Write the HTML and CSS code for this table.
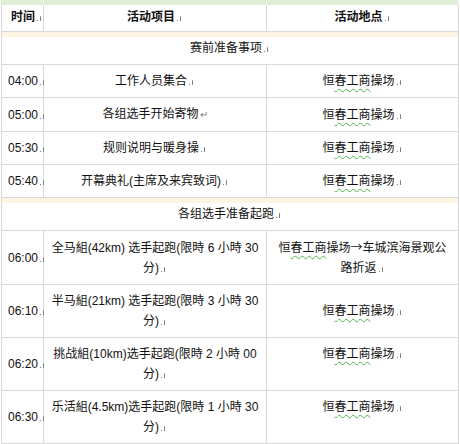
FILE: index.html
```html
<!DOCTYPE html>
<html lang="zh">
<head>
<meta charset="utf-8">
<title>赛程安排</title>
<link rel="stylesheet" href="styles.css">
</head>
<body>
<table class="sched">
  <colgroup><col class="c1"><col class="c2"><col class="c3"></colgroup>
  <tr class="green"><td></td><td></td><td></td></tr>
  <tr class="head">
    <td class="t">时间<i class="pm"></i></td>
    <td class="m">活动项目<i class="pm"></i></td>
    <td class="m">活动地点<i class="pm"></i></td>
  </tr>
  <tr class="cream"><td colspan="3"></td></tr>
  <tr class="section"><td colspan="3">赛前准备事项<i class="pm"></i></td></tr>
  <tr>
    <td class="t">04:00<i class="pm"></i></td>
    <td class="m">工作人员集合<i class="pm"></i></td>
    <td class="m">恒<span class="sp">春工商</span>操场<i class="pm"></i></td>
  </tr>
  <tr>
    <td class="t">05:00<i class="pm"></i></td>
    <td class="m">各组选手开始寄物<i class="br">↵</i></td>
    <td class="m">恒<span class="sp">春工商</span>操场<i class="pm"></i></td>
  </tr>
  <tr>
    <td class="t">05:30<i class="pm"></i></td>
    <td class="m">规则说明与暖身操<i class="pm"></i></td>
    <td class="m">恒<span class="sp">春工商</span>操场<i class="pm"></i></td>
  </tr>
  <tr>
    <td class="t">05:40<i class="pm"></i></td>
    <td class="m">开幕典礼(主席及来宾致词)<i class="pm"></i></td>
    <td class="m">恒<span class="sp">春工商</span>操场<i class="pm"></i></td>
  </tr>
  <tr class="cream"><td colspan="3"></td></tr>
  <tr class="section"><td colspan="3">各组选手准备起跑<i class="pm"></i></td></tr>
  <tr>
    <td class="t">06:00<i class="pm"></i></td>
    <td class="m">全马組(42km) 选手起跑(限時 6 小時 30<br>分)<i class="pm"></i></td>
    <td class="m">恒<span class="sp">春工商</span>操场<span class="cjk">→</span>车城滨海景观公<br>路折返<i class="pm"></i></td>
  </tr>
  <tr>
    <td class="t">06:10<i class="pm"></i></td>
    <td class="m">半马組(21km) 选手起跑(限時 3 小時 30<br>分)<i class="pm"></i></td>
    <td class="m">恒<span class="sp">春工商</span>操场<i class="pm"></i></td>
  </tr>
  <tr>
    <td class="t">06:20<i class="pm"></i></td>
    <td class="m">挑战組(10km)选手起跑(限時 2 小時 00<br>分)<i class="pm"></i></td>
    <td class="m top">恒<span class="sp">春工商</span>操场<i class="pm"></i></td>
  </tr>
  <tr>
    <td class="t">06:30<i class="pm"></i></td>
    <td class="m">乐活組(4.5km)选手起跑(限時 1 小時 30<br>分)<i class="pm"></i></td>
    <td class="m top">恒<span class="sp">春工商</span>操场<i class="pm"></i></td>
  </tr>
  <tr class="cream"><td colspan="3"></td></tr>
</table>
</body>
</html>
```

FILE: styles.css
```css
html, body {
  margin: 0;
  padding: 0;
  background: #ffffff;
}

body {
  font-family: "Liberation Sans", "Noto Sans CJK SC", sans-serif;
  font-size: 12px;
  color: #111111;
}

.sched {
  margin-left: 1px;
  border-collapse: separate;
  border-spacing: 0;
  table-layout: fixed;
  width: 458px;
}

.c1 { width: 43px; }
.c2 { width: 223px; }
.c3 { width: 192px; }

.sched td {
  border-right: 1px solid #d9d9d9;
  border-bottom: 1px solid #d9d9d9;
  padding: 6px 0;
  line-height: 20px;
  vertical-align: middle;
  white-space: nowrap;
}

.sched td:first-child {
  border-left: 1px solid #d9d9d9;
}

.sched .green td {
  height: 5px;
  padding: 0;
  line-height: 0;
  background: #dfefd7;
  border-bottom: 0;
  border-right-color: #f4faf1;
  border-left-color: #dfefd7;
}

.sched .head td {
  padding: 2px 0 4px;
  font-weight: bold;
}

.sched .head td.t {
  padding-left: 9px;
}

.sched .cream td {
  height: 5px;
  padding: 0;
  line-height: 0;
  background: #fdf5e2;
  border-bottom: 0;
}

.sched .section td {
  padding: 1px 0 6px;
  text-align: center;
}

.sched td.t {
  padding-left: 6px;
  text-align: left;
}

.sched td.m {
  text-align: center;
}

.sched td.top {
  vertical-align: top;
}

.sp {
  text-decoration: underline wavy #4cb34c;
  text-decoration-thickness: 1px;
  text-underline-offset: 3px;
}

.cjk {
  font-family: "Noto Sans CJK SC", sans-serif;
}

.pm {
  display: inline-block;
  width: 6px;
  height: 6px;
  margin-left: 2px;
  position: relative;
  vertical-align: baseline;
}

.pm::before {
  content: "";
  position: absolute;
  left: 0;
  bottom: 0;
  width: 1px;
  height: 1px;
  background: #808080;
}

.pm::after {
  content: "";
  position: absolute;
  left: 3px;
  bottom: 0;
  width: 1px;
  height: 4px;
  border-top: 1px solid #a0a0a0;
  border-left: 0;
  background: #808080;
}

.br {
  font-style: normal;
  font-size: 10px;
  color: #808080;
  margin-left: 1px;
}
```
